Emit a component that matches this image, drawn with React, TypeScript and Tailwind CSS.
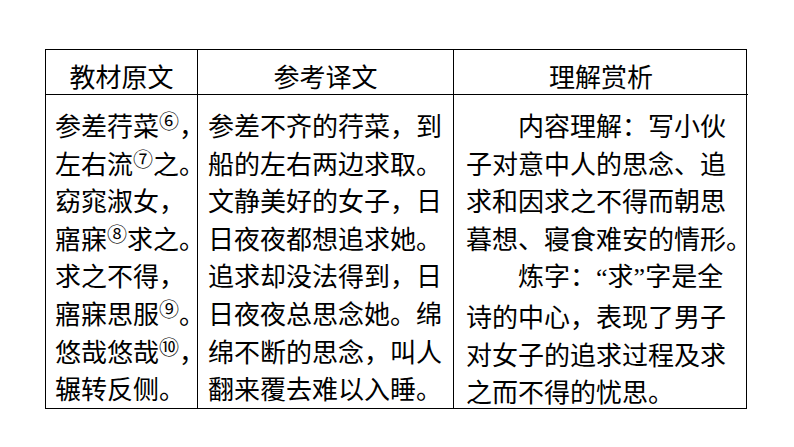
import type { ReactNode } from 'react';

const font = { fontFamily: '"Noto Sans CJK SC", "Noto Sans", sans-serif' };

function Note({ n }: { n: string }) {
  return <span className="inline-block align-top text-[20px] leading-[30px]">{n}</span>;
}

function Q({ c }: { c: string }) {
  return <span className="font-['Liberation_Serif',serif]">{c}</span>;
}

const original: ReactNode[] = [
  <>参差荇菜<Note n="⑥" />，</>,
  <>左右流<Note n="⑦" />之。</>,
  <>窈窕淑女，</>,
  <>寤寐<Note n="⑧" />求之。</>,
  <>求之不得，</>,
  <>寤寐思服<Note n="⑨" />。</>,
  <>悠哉悠哉<Note n="⑩" />，</>,
  <>辗转反侧。</>,
];

const translation = [
  '参差不齐的荇菜，到',
  '船的左右两边求取。',
  '文静美好的女子，日',
  '日夜夜都想追求她。',
  '追求却没法得到，日',
  '日夜夜总思念她。绵',
  '绵不断的思念，叫人',
  '翻来覆去难以入睡。',
];

const analysis: { text: ReactNode; indent?: boolean }[] = [
  { text: '内容理解：写小伙', indent: true },
  { text: '子对意中人的思念、追' },
  { text: '求和因求之不得而朝思' },
  { text: '暮想、寝食难安的情形。' },
  { text: <>炼字：<Q c="“" />求<Q c="”" />字是全</>, indent: true },
  { text: '诗的中心，表现了男子' },
  { text: '对女子的追求过程及求' },
  { text: '之而不得的忧思。' },
];

export default function App() {
  return (
    <div className="w-[794px] h-[447px] bg-white pl-[45px] pt-[49px] text-black" style={font}>
      <div className="grid grid-cols-[151px_256px_295px] w-[702px] border border-black text-[26px]">
        <div className="h-[45px] border-b border-black flex items-center justify-center pt-[6px]">教材原文</div>
        <div className="h-[45px] border-b border-l border-black flex items-center justify-center pt-[6px]">参考译文</div>
        <div className="h-[45px] border-b border-l border-black flex items-center justify-center pt-[6px]">理解赏析</div>

        <div className="h-[313px] pt-[11px] pl-[9px] leading-[37.6px] whitespace-nowrap">
          {original.map((line, i) => (
            <div key={i}>{line}</div>
          ))}
        </div>
        <div className="h-[313px] pt-[11px] pl-[10px] border-l border-black leading-[37.6px] whitespace-nowrap">
          {translation.map((line, i) => (
            <div key={i}>{line}</div>
          ))}
        </div>
        <div className="h-[313px] pt-[11px] pl-[12px] border-l border-black leading-[37.6px] whitespace-nowrap">
          {analysis.map((line, i) => (
            <div key={i} className={line.indent ? 'pl-[52px]' : ''}>
              {line.text}
            </div>
          ))}
        </div>
      </div>
    </div>
  );
}
